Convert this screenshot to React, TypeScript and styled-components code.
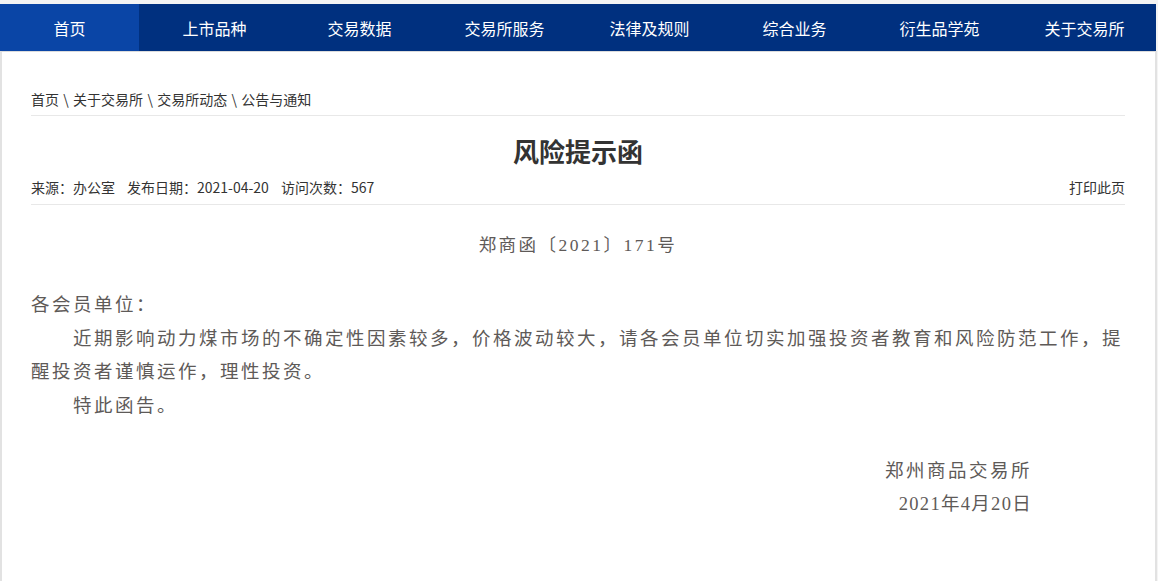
import React from "react";
import styled, { createGlobalStyle } from "styled-components";

const GlobalStyle = createGlobalStyle`
  html, body {
    margin: 0;
    padding: 0;
    background: #f4f4f4;
  }
  body {
    font-family: "Noto Sans CJK SC", "Noto Sans", sans-serif;
  }
  * { box-sizing: border-box; }
`;

const Page = styled.div`
  width: 1158px;
  min-height: 581px;
  padding-top: 4px;
  display: flex;
  flex-direction: column;
`;

const Nav = styled.nav`
  width: 1156px;
  height: 47px;
  background: #00307f;
  display: flex;
  gap: 6px;
`;

const NavItem = styled.a<{ $active?: boolean }>`
  width: 139px;
  flex: none;
  display: flex;
  align-items: center;
  justify-content: center;
  color: #ffffff;
  font-size: 16px;
  text-decoration: none;
  background: ${(p) => (p.$active ? "#0a45a6" : "transparent")};
`;

const Main = styled.main`
  width: 1157px;
  flex: 1;
  min-height: 530px;
  background: #ffffff;
  border-top: 1px solid #dcdcdc;
  border-left: 2px solid #e2e2e2;
  border-right: 2px solid #e2e2e2;
  padding: 36px 0 0 29px;
`;

const Inner = styled.div`
  width: 1094px;
`;

const Breadcrumb = styled.div`
  display: flex;
  align-items: center;
  height: 28px;
  padding-bottom: 6px;
  font-size: 14px;
  line-height: 20px;
  color: #333333;
  border-bottom: 1px solid #e8e8e8;
`;

const Sep = styled.span`
  margin: 0 4.3px;
`;

const Title = styled.h1`
  margin: 17px 0 0;
  text-align: center;
  font-size: 26px;
  line-height: 36px;
  font-weight: 700;
  color: #333333;
`;

const Meta = styled.div`
  margin-top: 8px;
  display: flex;
  justify-content: space-between;
  font-size: 14px;
  line-height: 20px;
  color: #333333;
  padding-bottom: 7px;
  border-bottom: 1px solid #e8e8e8;
`;

const MetaItem = styled.span`
  margin-right: 12px;
`;

const DocNo = styled.p`
  margin: 25px 0 0;
  text-align: center;
  font-family: "Liberation Serif", "Noto Sans CJK SC", serif;
  font-size: 17.5px;
  letter-spacing: 2.5px;
  line-height: 30px;
  color: #5e5a58;
`;

const Body = styled.div`
  margin-top: 29px;
  font-family: "Liberation Serif", "Noto Sans CJK SC", serif;
  font-size: 18.5px;
  letter-spacing: 2.5px;
  line-height: 33.5px;
  color: #5e5a58;
`;

const Para = styled.p<{ $indent?: boolean }>`
  margin: 0;
  text-indent: ${(p) => (p.$indent ? "42px" : "0")};
`;

const Signature = styled.div`
  margin-top: 32px;
  padding-right: 93px;
  display: flex;
  flex-direction: column;
  align-items: flex-end;
  font-family: "Liberation Serif", "Noto Sans CJK SC", serif;
  color: #5e5a58;
  line-height: 33px;
`;

const SignLine = styled.div<{ $size: number; $spacing: number }>`
  font-size: ${(p) => p.$size}px;
  letter-spacing: ${(p) => p.$spacing}px;
`;

const navItems = [
  "首页",
  "上市品种",
  "交易数据",
  "交易所服务",
  "法律及规则",
  "综合业务",
  "衍生品学苑",
  "关于交易所",
];

export default function App() {
  return (
    <>
      <GlobalStyle />
      <Page>
        <Nav>
          {navItems.map((n, i) => (
            <NavItem key={n} href="#" $active={i === 0}>
              {n}
            </NavItem>
          ))}
        </Nav>
        <Main>
          <Inner>
            <Breadcrumb>
              首页<Sep>\</Sep>关于交易所<Sep>\</Sep>交易所动态<Sep>\</Sep>公告与通知
            </Breadcrumb>
            <Title>风险提示函</Title>
            <Meta>
              <span>
                <MetaItem>来源：办公室</MetaItem>
                <MetaItem>发布日期：2021-04-20</MetaItem>
                <span>访问次数：567</span>
              </span>
              <span>打印此页</span>
            </Meta>
            <DocNo>郑商函〔2021〕171号</DocNo>
            <Body>
              <Para>各会员单位：</Para>
              <Para $indent>
                近期影响动力煤市场的不确定性因素较多，价格波动较大，请各会员单位切实加强投资者教育和风险防范工作，提醒投资者谨慎运作，理性投资。
              </Para>
              <Para $indent>特此函告。</Para>
            </Body>
            <Signature>
              <SignLine $size={18.5} $spacing={2.5}>郑州商品交易所</SignLine>
              <SignLine $size={18.5} $spacing={1.3}>2021年4月20日</SignLine>
            </Signature>
          </Inner>
        </Main>
      </Page>
    </>
  );
}
